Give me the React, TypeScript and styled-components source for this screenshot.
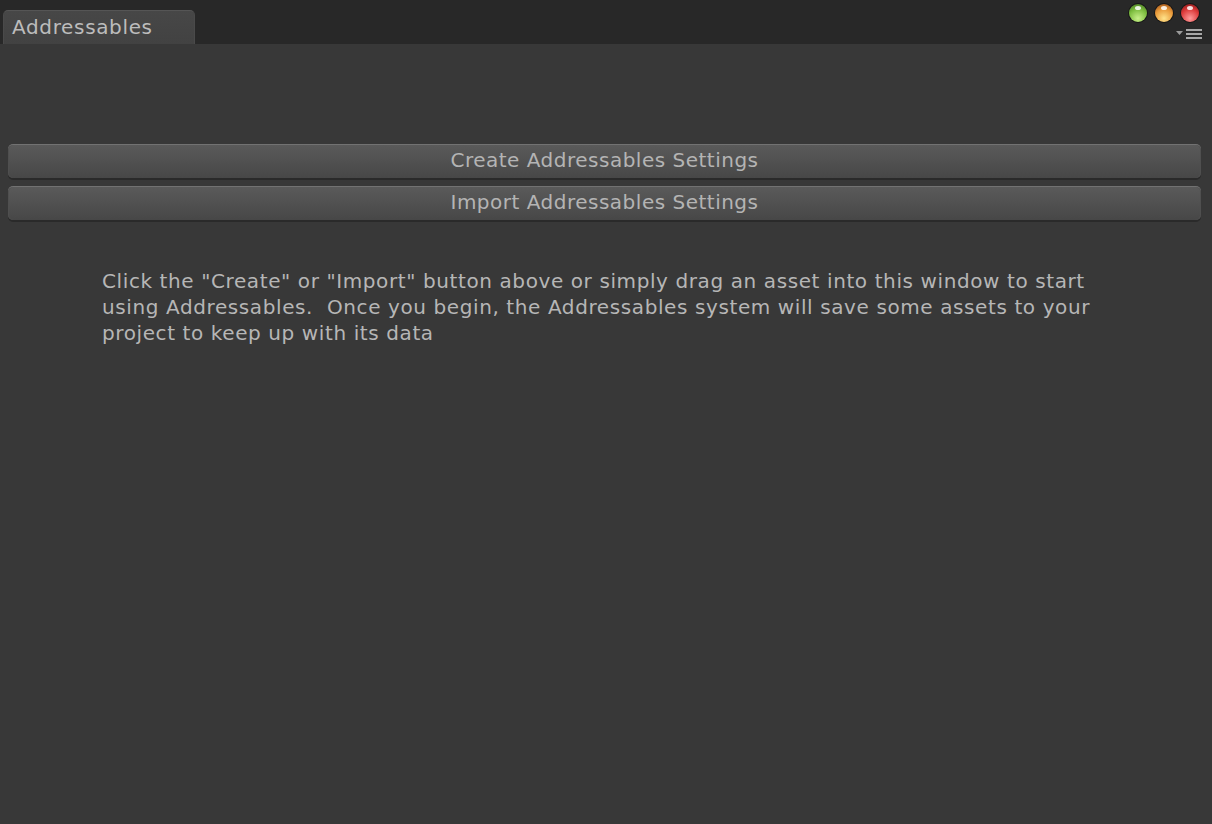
import React from "react";
import styled, { createGlobalStyle } from "styled-components";

const Global = createGlobalStyle`
  html, body { margin: 0; padding: 0; background: #383838; }
  body { font-family: "DejaVu Sans", "Liberation Sans", sans-serif; }
  #root { width: 1212px; height: 824px; }
`;

const Window = styled.div`
  width: 1212px;
  height: 824px;
  display: flex;
  flex-direction: column;
  background: #383838;
  overflow: hidden;
`;

const TitleBar = styled.div`
  height: 44px;
  flex: none;
  background: #282828;
  display: flex;
  align-items: flex-end;
  justify-content: space-between;
  padding-left: 3px;
`;

const Tab = styled.div`
  width: 192px;
  height: 34px;
  box-sizing: border-box;
  background: linear-gradient(#474747, #424242);
  border-top: 1px solid #555;
  border-left: 1px solid #4a4a4a;
  border-right: 1px solid #4a4a4a;
  border-radius: 5px 5px 0 0;
  color: #bcbcbc;
  font-size: 20px;
  padding: 4px 0 0 8px;
  letter-spacing: 0.65px;
`;

const Controls = styled.div`
  align-self: stretch;
  display: flex;
  flex-direction: column;
  align-items: flex-end;
  padding-top: 4px;
  gap: 7px;
`;

const Lights = styled.div`
  display: flex;
  gap: 8px;
  margin-right: 13px;
`;

const Light = styled.div<{ $c1: string; $c2: string; $c3: string }>`
  width: 18px;
  height: 18px;
  border-radius: 50%;
  background: radial-gradient(circle at 50% 80%, ${(p) => p.$c1} 0%, ${(p) => p.$c2} 55%, ${(p) => p.$c3} 100%);
  box-shadow: 0 0 0 1px rgba(0, 0, 0, 0.45);
  position: relative;
  &::after {
    content: "";
    position: absolute;
    left: 6px;
    top: 2px;
    width: 6px;
    height: 4px;
    border-radius: 50%;
    background: rgba(255, 255, 255, 0.85);
  }
`;

const MenuIcon = styled.svg`
  display: block;
  margin-right: 8px;
`;

const Body = styled.div`
  flex: 1;
  display: flex;
  flex-direction: column;
  padding: 100px 11px 0 8px;
`;

const Buttons = styled.div`
  display: flex;
  flex-direction: column;
  gap: 8px;
`;

const Button = styled.button`
  height: 34px;
  width: 100%;
  box-sizing: border-box;
  border: none;
  border-top: 1px solid #727272;
  border-radius: 5px;
  background: linear-gradient(#5a5a5a, #474747);
  box-shadow: 0 2px 0 #2a2a2a, inset 1px 0 0 #4f4f4f, inset -1px 0 0 #4f4f4f;
  color: #b4b4b4;
  font-family: "DejaVu Sans", "Liberation Sans", sans-serif;
  font-size: 20px;
  letter-spacing: 0.5px;
  padding: 0 0 3px 0;
  cursor: pointer;
`;

const Info = styled.p`
  margin: 48px 0 0 94px;
  width: 1004px;
  color: #b6b6b6;
  font-size: 20px;
  line-height: 26px;
  letter-spacing: 0.6px;
  white-space: pre-wrap;
`;

export default function App() {
  return (
    <Window>
      <Global />
      <TitleBar>
        <Tab>Addressables</Tab>
        <Controls>
          <Lights>
            <Light $c1="#c8f08a" $c2="#7cbd3e" $c3="#3f6d1c" />
            <Light $c1="#ffe38a" $c2="#e99a3a" $c3="#8a3f12" />
            <Light $c1="#ff9a9a" $c2="#dd3a3a" $c3="#7a1010" />
          </Lights>
          <MenuIcon width="28" height="10" viewBox="0 0 28 10">
            <polygon points="0,2 7,2 3.5,6" fill="#9a9a9a" />
            <rect x="10" y="0" width="16" height="2" fill="#a8a8a8" />
            <rect x="10" y="4" width="16" height="2" fill="#a8a8a8" />
            <rect x="10" y="8" width="16" height="2" fill="#a8a8a8" />
          </MenuIcon>
        </Controls>
      </TitleBar>
      <Body>
        <Buttons>
          <Button>Create Addressables Settings</Button>
          <Button>Import Addressables Settings</Button>
        </Buttons>
        <Info>
          {'Click the "Create" or "Import" button above or simply drag an asset into this window to start using Addressables.  Once you begin, the Addressables system will save some assets to your project to keep up with its data'}
        </Info>
      </Body>
    </Window>
  );
}
